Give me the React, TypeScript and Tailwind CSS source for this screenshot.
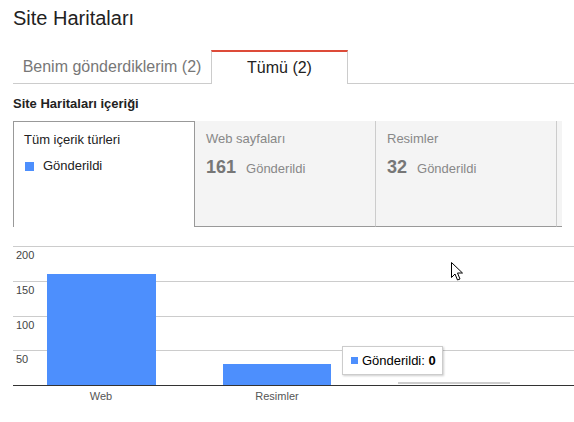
import React from 'react';

const BLUE = '#4d8ffd';

const gridY = [10, 45, 80, 114];
const gridLabels = ['200', '150', '100', '50'];

function Chart() {
  return (
    <svg width="574" height="180" className="block">
      {gridY.map((y, i) => (
        <g key={i}>
          <line x1="13" x2="574" y1={y + 0.5} y2={y + 0.5} stroke="#cccccc" strokeWidth="1" />
          <text x="16" y={y + 13} fontSize="11" fill="#444444" fontFamily="'Liberation Sans', Arial, sans-serif">
            {gridLabels[i]}
          </text>
        </g>
      ))}
      {/* bars */}
      <rect x="47" y="38" width="109" height="111" fill={BLUE} />
      <rect x="223" y="128" width="108" height="21" fill={BLUE} />
      <rect x="398" y="146" width="112" height="2" fill="#cccccc" />
      {/* axis */}
      <line x1="13" x2="574" y1="149.5" y2="149.5" stroke="#333333" strokeWidth="1" />
      <text x="101" y="164" fontSize="11" fill="#555555" textAnchor="middle" fontFamily="'Liberation Sans', Arial, sans-serif">
        Web
      </text>
      <text x="277" y="164" fontSize="11" fill="#555555" textAnchor="middle" fontFamily="'Liberation Sans', Arial, sans-serif">
        Resimler
      </text>
    </svg>
  );
}

function Cursor() {
  return (
    <svg width="14" height="20" viewBox="0 0 14 20" className="absolute left-[451px] top-[262px]">
      <path
        d="M0.5 0.5 L0.5 15.5 L4 12 L6.5 18 L9 17 L6.5 11 L11.5 11 Z"
        fill="#ffffff"
        stroke="#000000"
        strokeWidth="1"
        strokeLinejoin="miter"
      />
    </svg>
  );
}

export default function App() {
  return (
    <div className="relative w-[574px] h-[422px] overflow-hidden bg-white font-['Liberation_Sans',Arial,sans-serif]">
      {/* Page title */}
      <h1 className="pl-[13px] pt-[6px] text-[20px] leading-[24px] text-[#222222]">Site Haritaları</h1>

      {/* Tabs */}
      <div className="mt-[20px] flex h-[34px] pl-[13px]">
        <div className="flex w-[198px] items-center justify-center border-b border-[#cccccc] pt-[1px] text-[16px] text-[#777777]">
          Benim gönderdiklerim (2)
        </div>
        <div className="flex w-[137px] items-center justify-center border-t-2 border-x border-t-[#dd4b39] border-x-[#cccccc] text-[16px] text-[#222222]">
          Tümü (2)
        </div>
        <div className="flex-1 border-b border-[#cccccc]" />
      </div>

      <div className="mt-[12px] pl-[13px] text-[13px] font-bold leading-[16px] text-[#222222]">
        Site Haritaları içeriği
      </div>

      {/* Content type cards */}
      <div className="mt-[9px] flex h-[106px] pl-[13px]">
        <div className="w-[182px] border-x border-t border-[#999999] bg-white pl-[10px] pt-[10px] text-[13px] leading-[16px] text-[#222222]">
          <div>Tüm içerik türleri</div>
          <div className="mt-[10px] flex items-center">
            <span className="mr-[9px] ml-[1px] inline-block h-[9px] w-[9px] bg-[#4d8ffd]" />
            Gönderildi
          </div>
        </div>
        <div className="w-[181px] border-b border-r border-b-[#999999] border-r-[#cccccc] bg-[#f4f4f4] pl-[11px] pt-[10px]">
          <div className="text-[13px] leading-[16px] text-[#888888]">Web sayfaları</div>
          <div className="mt-[9px] flex items-baseline">
            <span className="text-[18px] font-bold leading-[22px] text-[#777777]">161</span>
            <span className="ml-[10px] text-[13px] text-[#888888]">Gönderildi</span>
          </div>
        </div>
        <div className="w-[181px] border-b border-r border-b-[#999999] border-r-[#cccccc] bg-[#f4f4f4] pl-[11px] pt-[10px]">
          <div className="text-[13px] leading-[16px] text-[#888888]">Resimler</div>
          <div className="mt-[9px] flex items-baseline">
            <span className="text-[18px] font-bold leading-[22px] text-[#777777]">32</span>
            <span className="ml-[10px] text-[13px] text-[#888888]">Gönderildi</span>
          </div>
        </div>
        <div className="w-[5px] border-b border-b-[#999999] bg-[#f4f4f4]" />
      </div>

      {/* Chart */}
      <div className="mt-[9px]">
        <Chart />
      </div>

      {/* Tooltip */}
      <div className="absolute left-[342px] top-[346px] flex h-[29px] w-[101px] items-center border border-[#cccccc] bg-white pl-[8px] text-[13px] text-black shadow-[1px_1px_2px_rgba(0,0,0,0.2)]">
        <span className="mr-[4px] inline-block h-[7px] w-[7px] bg-[#4d8ffd]" />
        <span>Gönderildi:&nbsp;</span>
        <span className="font-bold">0</span>
      </div>

      <Cursor />
    </div>
  );
}
